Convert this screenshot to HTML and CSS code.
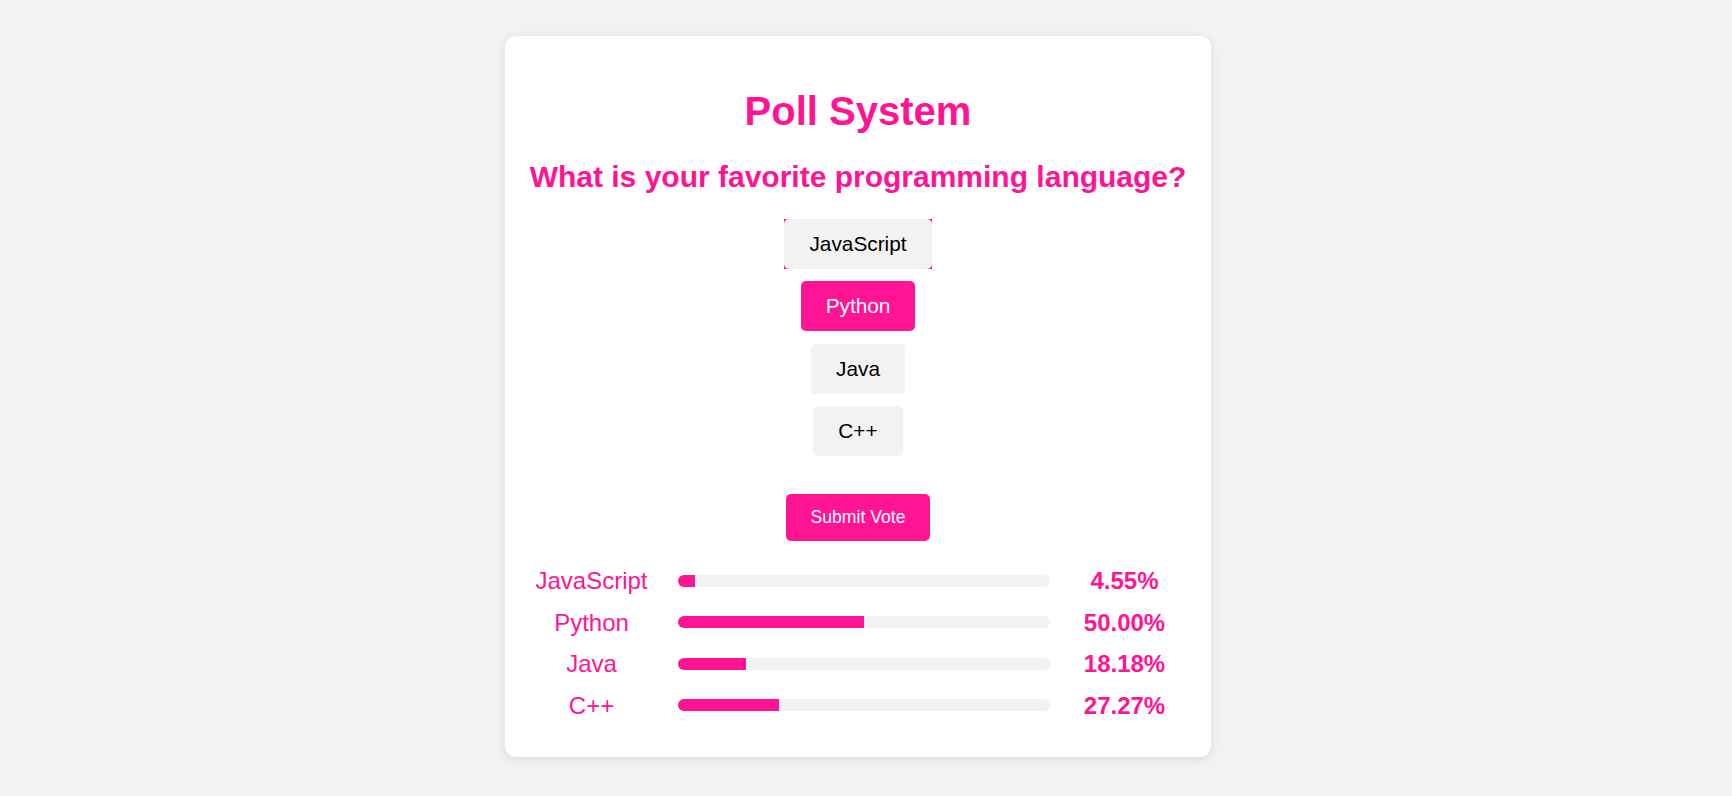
FILE: index.html
```html
<!DOCTYPE html>
<html lang="en">
<head>
<meta charset="utf-8">
<title>Poll System</title>
<link rel="stylesheet" href="styles.css">
</head>
<body>
  <main class="card">
    <h1 class="title">Poll System</h1>
    <h2 class="question">What is your favorite programming language?</h2>
    <div class="options">
      <button class="option option-focus">JavaScript</button>
      <button class="option option-selected">Python</button>
      <button class="option">Java</button>
      <button class="option">C++</button>
    </div>
    <button class="submit">Submit Vote</button>
    <div class="results">
      <div class="result-row">
        <span class="result-label">JavaScript</span>
        <div class="bar"><div class="bar-fill" style="width: 4.55%"></div></div>
        <span class="result-pct">4.55%</span>
      </div>
      <div class="result-row">
        <span class="result-label">Python</span>
        <div class="bar"><div class="bar-fill" style="width: 50%"></div></div>
        <span class="result-pct">50.00%</span>
      </div>
      <div class="result-row">
        <span class="result-label">Java</span>
        <div class="bar"><div class="bar-fill" style="width: 18.18%"></div></div>
        <span class="result-pct">18.18%</span>
      </div>
      <div class="result-row">
        <span class="result-label">C++</span>
        <div class="bar"><div class="bar-fill" style="width: 27.27%"></div></div>
        <span class="result-pct">27.27%</span>
      </div>
    </div>
  </main>
</body>
</html>
```

FILE: styles.css
```css
* {
  box-sizing: border-box;
}

html, body {
  margin: 0;
  padding: 0;
}

body {
  background: #f2f2f2;
  font-family: "Liberation Sans", Arial, sans-serif;
  display: flex;
  justify-content: center;
  padding: 36px 16px 40px 0;
  min-height: 796px;
}

.card {
  width: 706px;
  background: #ffffff;
  border-radius: 11px;
  box-shadow: 0 2px 10px rgba(0, 0, 0, 0.1);
  padding: 20px 20px 37.7px;
  display: flex;
  flex-direction: column;
  align-items: center;
}

.title {
  margin: 32px 0 0;
  font-size: 40px;
  line-height: 46px;
  font-weight: bold;
  color: #ff1493;
  text-align: center;
}

.question {
  margin: 26.3px 0 0;
  font-size: 30px;
  line-height: 34.5px;
  font-weight: bold;
  color: #ff1493;
  text-align: center;
  white-space: nowrap;
}

.options {
  margin-top: 24.1px;
  display: flex;
  flex-direction: column;
  align-items: center;
  gap: 12.4px;
}

.option {
  font-family: "Liberation Sans", Arial, sans-serif;
  font-size: 20.8px;
  line-height: normal;
  padding: 12px 24px;
  border: 1px solid transparent;
  border-radius: 5px;
  background: #f2f2f2;
  color: #000000;
  cursor: pointer;
}

.option-selected {
  background: #ff1493;
  color: #ffffff;
}

.option-focus {
  position: relative;
  isolation: isolate;
  border: none;
  padding: 13px 25px;
  border-radius: 0;
  background: #ff1493;
}

.option-focus::before {
  content: "";
  position: absolute;
  inset: 0;
  border-radius: 5px;
  background: #f2f2f2;
  z-index: -1;
}

.submit {
  margin-top: 38px;
  font-family: "Liberation Sans", Arial, sans-serif;
  font-size: 17.6px;
  line-height: normal;
  padding: 12px 24px;
  border: 1px solid transparent;
  border-radius: 5px;
  background: #ff1493;
  color: #ffffff;
  cursor: pointer;
}

.results {
  margin-top: 26px;
  align-self: stretch;
  display: flex;
  flex-direction: column;
  gap: 13.9px;
}

.result-row {
  display: flex;
  align-items: center;
  font-size: 24px;
  line-height: 27.6px;
  color: #ff1493;
}

.result-label {
  width: 133px;
  text-align: center;
}

.bar {
  flex: 1;
  margin: 0 8px 0 20px;
  height: 12px;
  border-radius: 6px;
  background: #f2f2f2;
  overflow: hidden;
}

.bar-fill {
  height: 100%;
  background: #ff1493;
}

.result-pct {
  width: 133px;
  text-align: center;
  font-weight: bold;
}
```
